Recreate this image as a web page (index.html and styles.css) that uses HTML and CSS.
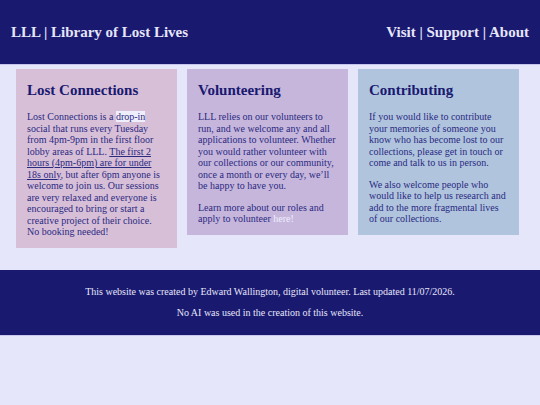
FILE: index.html
```html
<!DOCTYPE html>
<html lang="en">
<head>
<meta charset="utf-8">
<title>LLL | Library of Lost Lives</title>
<link rel="stylesheet" href="styles.css">
</head>
<body>
<header class="site-header">
  <h1 class="site-title">LLL | Library of Lost Lives</h1>
  <nav class="site-nav">Visit | Support | About</nav>
</header>
<main class="cards">
  <section class="card card-pink">
    <h2 class="card-title">Lost Connections</h2>
    <p class="card-text">Lost Connections is a <span class="highlight">drop-in</span> social that runs every Tuesday from 4pm-9pm in the first floor lobby areas of LLL. <u>The first 2 hours (4pm-6pm) are for under 18s only</u>, but after 6pm anyone is welcome to join us. Our sessions are very relaxed and everyone is encouraged to bring or start a creative project of their choice. No booking needed!</p>
  </section>
  <section class="card card-purple">
    <h2 class="card-title">Volunteering</h2>
    <p class="card-text">LLL relies on our volunteers to run, and we welcome any and all applications to volunteer. Whether you would rather volunteer with our collections or our community, once a month or every day, we’ll be happy to have you.</p>
    <p class="card-text">Learn more about our roles and apply to volunteer <a class="light-link" href="#">here!</a></p>
  </section>
  <section class="card card-blue">
    <h2 class="card-title">Contributing</h2>
    <p class="card-text">If you would like to contribute your memories of someone you know who has become lost to our collections, please get in touch or come and talk to us in person.</p>
    <p class="card-text">We also welcome people who would like to help us research and add to the more fragmental lives of our collections.</p>
  </section>
</main>
<footer class="site-footer">
  <p class="footer-text">This website was created by Edward Wallington, digital volunteer. Last updated 11/07/2026.</p>
  <p class="footer-text">No AI was used in the creation of this website.</p>
</footer>
</body>
</html>
```

FILE: styles.css
```css
html, body {
  margin: 0;
  padding: 0;
}

body {
  background: #e6e6fa;
  font-family: "Liberation Serif", "Times New Roman", serif;
  font-size: 10px;
  line-height: 11.5px;
  color: #191970;
}

.site-header {
  display: flex;
  align-items: center;
  justify-content: space-between;
  height: 64px;
  padding: 0 11px;
  background: #191970;
  color: #e6e6fa;
  border-bottom: 1px solid #c4c4ec;
}

.site-title {
  margin: 0;
  font-size: 15px;
  line-height: 17px;
  font-weight: bold;
}

.site-nav {
  font-size: 15px;
  line-height: 17px;
  font-weight: bold;
}

.cards {
  display: flex;
  align-items: flex-start;
  gap: 10px;
  padding: 4px 21px 22px 16px;
}

.card {
  flex: 0 0 161px;
  box-sizing: border-box;
  padding: 1px 11px 0;
}

.card-pink { background: #d8bfd8; }
.card-purple { background: #c6b6dc; }
.card-blue { background: #b0c4de; }

.card-title {
  margin: 12px 0 12px;
  font-size: 15px;
  line-height: 17px;
  font-weight: bold;
  color: #191970;
}

.card-text {
  margin: 10px 0;
  color: #2a2a80;
}

.highlight {
  background: #eeeefc;
}

.light-link {
  color: #eeeefc;
  text-decoration: none;
}

.site-footer {
  padding: 6px 0;
  background: #191970;
  color: #e6e6fa;
  text-align: center;
  border-bottom: 1px solid #c8c8f0;
}

.footer-text {
  margin: 10px 0;
}
```
